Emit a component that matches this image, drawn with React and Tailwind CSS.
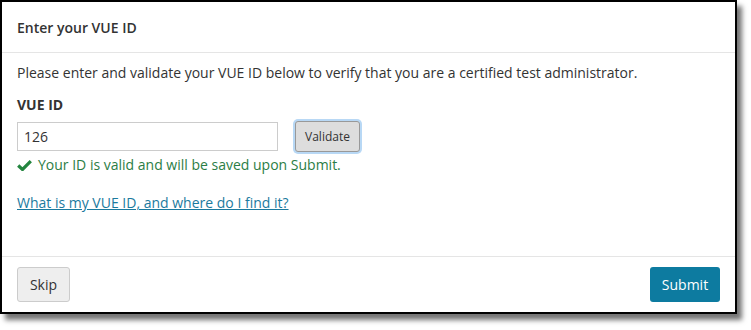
import React from 'react';

// VUE ID dialog
export default function App() {
    return (
        <div className="w-[751px] h-[330px] bg-white" style={{ fontFamily: '"Open Sans", "Noto Sans", sans-serif' }}>
            <div className="w-[737px] h-[314px] border-2 border-black bg-white flex flex-col shadow-[5px_6px_5px_rgba(0,0,0,0.55)]">
                <div className="h-[51px] shrink-0 flex items-center px-[15px] border-b border-[#e5e5e5] text-[14px] font-semibold text-[#333]">
                    Enter your VUE ID
                </div>
                <div className="flex-1 px-[15px] pt-[10px] text-[#333]">
                    <p className="text-[14px] leading-[20px]">
                        Please enter and validate your VUE ID below to verify that you are a certified test administrator.
                    </p>
                    <div className="mt-[12px] text-[14px] font-bold leading-[20px]">VUE ID</div>
                    <div className="mt-[6px] flex items-center">
                        <input
                            className="w-[261px] h-[29px] border border-[#ccc] px-[6px] text-[14px] text-[#333] outline-none"
                            defaultValue="126"
                        />
                        <button className="ml-[17px] h-[31px] w-[65px] bg-[#ddd] border border-[#999] rounded-[3px] text-[12px] text-[#333] ring-2 ring-[#b8d8f5]">
                            Validate
                        </button>
                    </div>
                    <div className="mt-[1px] flex items-center gap-[6px] text-[14px] text-[#2b7d45] leading-[24px]">
                        <svg width="15" height="11" viewBox="0 0 15 11">
                            <path d="M1.2 5.5 L5.5 9.5 L13.8 1.2" fill="none" stroke="#23853f" strokeWidth="3.2" />
                        </svg>
                        Your ID is valid and will be saved upon Submit.
                    </div>
                    <a href="#" className="inline-block mt-[16px] text-[14px] text-[#1b7a9e] underline leading-[20px]">
                        What is my VUE ID, and where do I find it?
                    </a>
                </div>
                <div className="h-[56px] shrink-0 border-t border-[#e5e5e5] flex items-start justify-between px-[15px] pt-[10px]">
                    <button className="w-[53px] h-[35px] bg-[#eee] border border-[#ccc] rounded-[3px] text-[14px] text-[#333]">
                        Skip
                    </button>
                    <button className="w-[70px] h-[35px] bg-[#0d7ba0] rounded-[3px] text-[14px] text-white">
                        Submit
                    </button>
                </div>
            </div>
        </div>
    );
}
